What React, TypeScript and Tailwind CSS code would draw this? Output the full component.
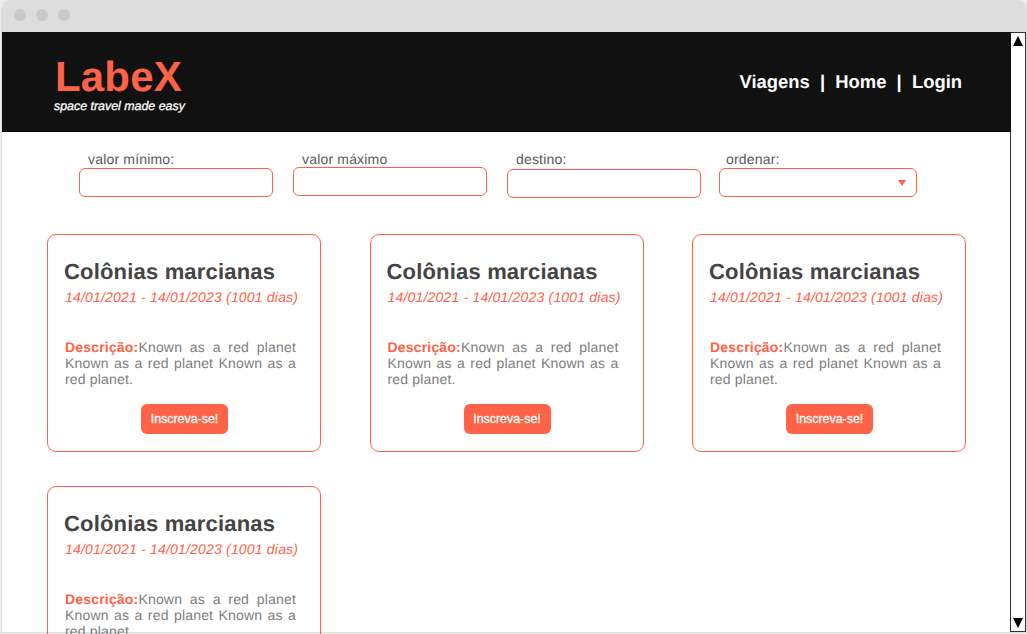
const FILTERS = [
  { label: "valor mínimo:", field: "mt-px w-[194px]", gap: "mr-5", pad: "pl-[9px]" },
  { label: "valor máximo", field: "w-[194px]", gap: "mr-5", pad: "pl-[9px]" },
  { label: "destino:", field: "mt-[2px] w-[194px]", gap: "mr-[18px]", pad: "pl-[9px]" },
];

function TripCard() {
  return (
    <article className="flex h-[218px] w-[274px] flex-col rounded-[9px] border border-[#ff6347] pl-4">
      <h2 className="mt-6 text-[22px] leading-[26px] font-bold tracking-[0.18px] whitespace-nowrap text-[#444]">Colônias marcianas</h2>
      <p className="mt-1 pl-px text-sm leading-4 tracking-[0.19px] whitespace-nowrap text-[#ff6347] italic">
        14/01/2021 - 14/01/2023 (1001 dias)
      </p>
      <p className="mt-[34px] ml-px w-[231px] text-justify text-sm leading-4 tracking-[0.18px] text-[#7d7d7d]">
        <b className="text-[#ff6347]">Descrição:</b>Known as a red planet Known as a red planet Known as a red planet.
      </p>
      <button className="mt-[17px] ml-[77px] h-[30px] w-[87px] shrink-0 rounded-md bg-[#ff6347] text-[12.4px] whitespace-nowrap text-white [-webkit-text-stroke:0.3px_white]">
        Inscreva-se!
      </button>
    </article>
  );
}

export default function App() {
  return (
    <div className="h-[634px] w-[1027px] overflow-hidden bg-[#eeeeee] pl-px font-['Liberation_Sans',Arial,sans-serif] [text-rendering:geometricPrecision]">
      <div className="flex h-[633px] w-[1026px] flex-col rounded-t-lg border border-t-0 border-[#dddddd] bg-white">
        <div className="flex h-8 shrink-0 items-center gap-[10px] rounded-t-lg bg-[#dddddd] pb-[2px] pl-3">
          <span className="size-3 rounded-full bg-[#c9c9c9]" />
          <span className="size-3 rounded-full bg-[#c9c9c9]" />
          <span className="size-3 rounded-full bg-[#c9c9c9]" />
        </div>
        <div className="flex h-[602px] shrink-0">
          <main className="z-10 flex w-[1008px] flex-col">
            <header className="-mr-px flex h-[100px] shrink-0 justify-between border-b border-black bg-[#111111] pr-[49px] pl-[52px]">
              <div className="pt-[21px]">
                <h1 className="pl-px text-[42px] leading-[48px] font-bold tracking-[0.18px] text-[#ff6347]">LabeX</h1>
                <p className="-mt-[2px] text-[12.4px] leading-[14px] text-white italic [-webkit-text-stroke:0.3px_white]">
                  space travel made easy
                </p>
              </div>
              <nav className="pt-10 text-[18.4px] leading-5 font-bold whitespace-pre text-white">
                {"Viagens  |  Home  |  Login"}
              </nav>
            </header>
            <form className="mt-[19px] flex h-[48px] shrink-0 pl-[77px] text-sm tracking-[0.18px] text-[#5a5a5a]">
              {FILTERS.map((f) => (
                <label key={f.label} className={`${f.gap} block`}>
                  <span className={`block h-4 leading-4 ${f.pad}`}>{f.label}</span>
                  <input className={`block h-[29px] rounded-md border border-[#ff6347] ${f.field}`} />
                </label>
              ))}
              <div>
                <span className="block h-4 pl-[7px] leading-4">ordenar:</span>
                <div className="mt-px flex h-[29px] w-[198px] items-center justify-end rounded-md border border-[#ff6347] pr-[10px]">
                  <svg width="8" height="6" viewBox="0 0 8 6" fill="#ff6347">
                    <path d="M0 0h8L4 6z" />
                  </svg>
                </div>
              </div>
            </form>
            <section className="mt-[35px] grid grid-cols-[274px_274px_274px] gap-x-[48.5px] gap-y-[34px] pl-[45px]">
              <TripCard />
              <TripCard />
              <TripCard />
              <TripCard />
            </section>
          </main>
          <div className="flex h-[600px] w-4 flex-col items-center justify-between border border-[#333] bg-white py-[3px]">
            <svg width="10" height="10" viewBox="0 0 10 10">
              <path d="M0 10h10L5 0z" />
            </svg>
            <svg width="10" height="10" viewBox="0 0 10 10">
              <path d="M0 0h10L5 10z" />
            </svg>
          </div>
        </div>
      </div>
    </div>
  );
}
